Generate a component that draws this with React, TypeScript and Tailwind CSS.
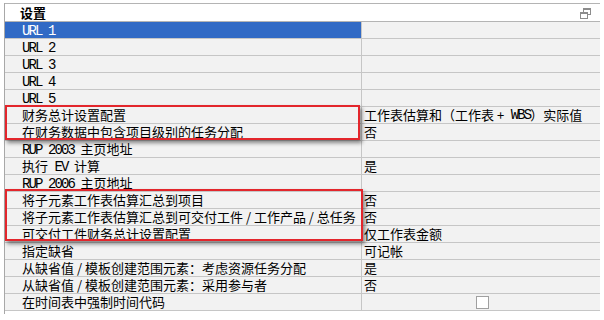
import React from "react";

type Row = { name: string; value?: string; selected?: boolean; checkbox?: boolean };

const rows: Row[] = [
  { name: "URL 1", selected: true },
  { name: "URL 2" },
  { name: "URL 3" },
  { name: "URL 4" },
  { name: "URL 5" },
  { name: "财务总计设置配置", value: "工作表估算和（工作表 + WBS）实际值" },
  { name: "在财务数据中包含项目级别的任务分配", value: "否" },
  { name: "RUP 2003 主页地址" },
  { name: "执行 EV 计算", value: "是" },
  { name: "RUP 2006 主页地址" },
  { name: "将子元素工作表估算汇总到项目", value: "否" },
  { name: "将子元素工作表估算汇总到可交付工件 / 工作产品 / 总任务", value: "否" },
  { name: "可交付工件财务总计设置配置", value: "仅工作表金额" },
  { name: "指定缺省", value: "可记帐" },
  { name: "从缺省值 / 模板创建范围元素：考虑资源任务分配", value: "是" },
  { name: "从缺省值 / 模板创建范围元素：采用参与者", value: "否" },
  { name: "在时间表中强制时间代码", checkbox: true },
];

const monoRe = / *[A-Za-z0-9]+(?: +[A-Za-z0-9]+)* */g;

function Txt({ text }: { text: string }) {
  const parts: { t: string; mono: boolean }[] = [];
  let last = 0;
  for (const m of text.matchAll(monoRe)) {
    const idx = m.index ?? 0;
    if (idx > last) parts.push({ t: text.slice(last, idx), mono: false });
    parts.push({ t: m[0], mono: true });
    last = idx + m[0].length;
  }
  if (last < text.length) parts.push({ t: text.slice(last), mono: false });
  return (
    <>
      {parts.map((p, i) =>
        p.mono ? (
          <span
            key={i}
            className="text-[14px] tracking-[-1.9px] whitespace-pre"
            style={{ fontFamily: '"Liberation Mono", monospace' }}
          >
            {p.t}
          </span>
        ) : (
          <span key={i} className="whitespace-pre" style={{ fontFamily: '"Noto Sans CJK SC", sans-serif' }}>
            {p.t}
          </span>
        )
      )}
    </>
  );
}

export default function App() {
  return (
    <div className="relative w-[604px] h-[320px] bg-white overflow-hidden text-black">
      <div className="pt-[3px] pl-[4px]">
        <div className="w-[596px] border-l border-[#a8a8a8] pb-[3px]">
          <div className="flex items-center h-[19px] border-t border-b border-[#b4b4b4] bg-white">
            <span
              className="pl-[15px] text-[13px] leading-[17px] font-bold"
              style={{ fontFamily: '"Noto Sans CJK SC", sans-serif' }}
            >
              设置
            </span>
            <div className="ml-auto mr-[9px] mt-[1px]">
              <svg width="11" height="11" viewBox="0 0 11 11">
                <rect x="3.5" y="0.5" width="7" height="6" fill="none" stroke="#8c8c8c" />
                <line x1="3" y1="1.5" x2="11" y2="1.5" stroke="#8c8c8c" />
                <rect x="0.5" y="4.5" width="7" height="6" fill="#fff" stroke="#8c8c8c" />
                <line x1="0" y1="5.5" x2="8" y2="5.5" stroke="#8c8c8c" />
              </svg>
            </div>
          </div>
          {rows.map((r, i) => (
            <div key={i} className="flex h-[17px] border-b border-[#c6c6c6] bg-[#f2f2f2]">
              <div
                className={
                  "w-[357px] shrink-0 border-r border-[#c6c6c6] pl-[17px] text-[13px] leading-[16px] whitespace-nowrap overflow-hidden " +
                  (r.selected ? "bg-[#316ac5] text-white" : "")
                }
              >
                <Txt text={r.name} />
              </div>
              <div className="flex-1 pl-[2px] text-[13px] leading-[16px] whitespace-nowrap overflow-hidden flex items-center">
                {r.checkbox ? (
                  <div className="mx-auto w-[13px] h-[13px] border border-[#a0a0a0] bg-white" />
                ) : r.value ? (
                  <Txt text={r.value} />
                ) : null}
              </div>
            </div>
          ))}
        </div>
      </div>
      <div className="absolute left-[5px] top-[105px] w-[355px] h-[35px] border-2 border-[#e3262c] shadow-[2px_3px_4px_rgba(0,0,0,0.45)]" />
      <div className="absolute left-[5px] top-[189px] w-[358px] h-[52px] border-2 border-[#e3262c] shadow-[2px_3px_4px_rgba(0,0,0,0.45)]" />
    </div>
  );
}
